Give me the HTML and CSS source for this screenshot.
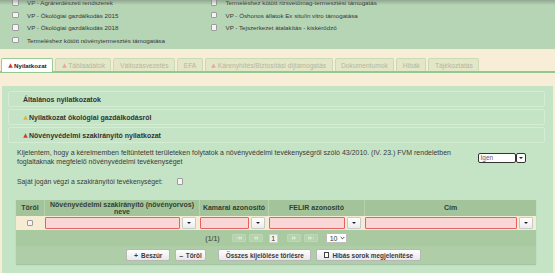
FILE: index.html
```html
<!DOCTYPE html>
<html lang="hu">
<head>
<meta charset="utf-8">
<title>Nyilatkozat</title>
<link rel="stylesheet" href="styles.css">
</head>
<body>
<section class="support">
  <div class="support-grid">
    <label class="opt"><span class="cb"></span>VP - Agrárerdészeti rendszerek</label>
    <label class="opt"><span class="cb"></span>Termeléshez kötött rizsvetőmag-termesztési támogatás</label>
    <label class="opt"><span class="cb"></span>VP - Ökológiai gazdálkodás 2015</label>
    <label class="opt"><span class="cb"></span>VP - Őshonos állatok Ex situ/in vitro támogatása</label>
    <label class="opt"><span class="cb"></span>VP - Ökológiai gazdálkodás 2018</label>
    <label class="opt"><span class="cb"></span>VP - Tejszerkezet átalakítás - kiskérődző</label>
    <label class="opt"><span class="cb"></span>Termeléshez kötött növénytermesztés támogatása</label>
  </div>
</section>

<nav class="tabs">
  <div class="tab active"><svg class="warn" viewBox="0 0 10 10"><path d="M5 0.5 L9.6 9.5 H0.4 Z" fill="#d23b32"/></svg>Nyilatkozat</div>
  <div class="tab"><svg class="warn" viewBox="0 0 10 10"><path d="M5 0.5 L9.6 9.5 H0.4 Z" fill="#eaa79d"/></svg>Táblaadatok</div>
  <div class="tab">Változásvezetés</div>
  <div class="tab">EFA</div>
  <div class="tab"><svg class="warn" viewBox="0 0 10 10"><path d="M5 0.5 L9.6 9.5 H0.4 Z" fill="#eaa79d"/></svg>Kárenyhítés/Biztosítási díjtámogatás</div>
  <div class="tab">Dokumentumok</div>
  <div class="tab">Hibák</div>
  <div class="tab">Tájékoztatás</div>
</nav>

<main class="panel">
  <div class="acc">Általános nyilatkozatok</div>
  <div class="acc"><svg class="warn" viewBox="0 0 10 10"><path d="M5 0.5 L9.6 9.5 H0.4 Z" fill="#e2b23c"/></svg>Nyilatkozat ökológiai gazdálkodásról</div>
  <div class="acc"><svg class="warn" viewBox="0 0 10 10"><path d="M5 0.5 L9.6 9.5 H0.4 Z" fill="#d23b32"/></svg>Növényvédelmi szakirányító nyilatkozat</div>

  <div class="decl">
    <p>Kijelentem, hogy a kérelmemben feltüntetett területeken folytatok a növényvédelmi tevékenységről szóló 43/2010. (IV. 23.) FVM rendeletben foglaltaknak megfelelő növényvédelmi tevékenységet</p>
    <div class="yesno"><span class="yn-val">Igen</span><span class="yn-btn"></span></div>
  </div>

  <div class="self">Saját jogán végzi a szakirányítói tevékenységet: <span class="cb"></span></div>

  <div class="tbl">
    <div class="cols thead">
      <div class="th">Töröl</div>
      <div class="th">Növényvédelmi szakirányító (növényorvos) neve</div>
      <div class="th th-nowrap">Kamarai azonosító</div>
      <div class="th th-nowrap">FELIR azonosító</div>
      <div class="th">Cím</div>
    </div>
    <div class="cols trow">
      <div class="td td-check"><span class="cb"></span></div>
      <div class="td"><span class="inp"></span><span class="dd"></span></div>
      <div class="td"><span class="inp"></span><span class="dd"></span></div>
      <div class="td"><span class="inp"></span><span class="dd"></span></div>
      <div class="td"><span class="inp"></span><span class="dd"></span></div>
    </div>
    <div class="pager">
      <span class="pg-info">(1/1)</span>
      <span class="pg-btn pg-first"><svg viewBox="0 0 14 8"><path d="M4 2 V6 M8 2 L5.5 4 L8 6 Z M10.5 2 L8 4 L10.5 6 Z" stroke="#d6ead2" stroke-width="0.8" fill="#d6ead2"/></svg></span>
      <span class="pg-btn pg-prev"><svg viewBox="0 0 14 8"><path d="M7 2 L4.5 4 L7 6 Z M9.5 2 L7 4 L9.5 6 Z" stroke="#d6ead2" stroke-width="0.8" fill="#d6ead2"/></svg></span>
      <span class="pg-page">1</span>
      <span class="pg-btn pg-next"><svg viewBox="0 0 14 8"><path d="M4.5 2 L7 4 L4.5 6 Z M7 2 L9.5 4 L7 6 Z" stroke="#d6ead2" stroke-width="0.8" fill="#d6ead2"/></svg></span>
      <span class="pg-btn pg-last"><svg viewBox="0 0 14 8"><path d="M3.5 2 L6 4 L3.5 6 Z M6 2 L8.5 4 L6 6 Z M10 2 V6" stroke="#d6ead2" stroke-width="0.8" fill="#d6ead2"/></svg></span>
      <span class="pg-size">10<svg viewBox="0 0 6 4"><path d="M0.8 0.8 L3 3 L5.2 0.8" stroke="#333" stroke-width="1.1" fill="none"/></svg></span>
    </div>
    <div class="actions">
      <button class="btn"><span class="ico-plus">+</span>Beszúr</button>
      <button class="btn btn-tight"><span class="ico-minus">–</span>Töröl</button>
      <button class="btn btn-wide">Összes kijelölése törlésre</button>
      <button class="btn"><span class="ico-box"></span>Hibás sorok megjelenítése</button>
    </div>
  </div>
</main>
</body>
</html>
```

FILE: styles.css
```css
* { box-sizing: border-box; margin: 0; padding: 0; }
html, body { width: 555px; height: 273px; overflow: hidden; }
body {
  background: #f8edd6;
  font-family: "Liberation Sans", Arial, sans-serif;
  color: #333;
}

/* top support list */
.support {
  position: relative;
  height: 49px;
  background: #b5d5b5;
  overflow: hidden;
}
.support::after {
  content: "";
  position: absolute;
  left: 0; right: 0; top: 0;
  height: 5px;
  background: linear-gradient(rgba(110, 120, 110, .5), rgba(110, 120, 110, 0));
}
.support-grid {
  display: grid;
  grid-template-columns: 198.5px 1fr;
  grid-auto-rows: 12.5px;
  margin-top: -3.75px;
  padding-left: 12px;
  font-size: 6.2px;
  color: #353535;
}
.opt { display: flex; align-items: center; gap: 8.5px; white-space: nowrap; }
.cb {
  flex: none;
  width: 6.5px; height: 6.5px;
  border: 1px solid #9c9c9c;
  background: #f4f4f4;
  border-radius: 1px;
}

/* tabs */
.tabs {
  display: flex;
  align-items: flex-end;
  gap: 2px;
  height: 15px;
  margin-top: 9px;
  padding-left: 1px;
  border-bottom: 2px solid #92c992;
}
.tab {
  display: flex;
  align-items: center;
  gap: 1.5px;
  height: 13px;
  padding: 0 5.5px;
  font-size: 6.7px;
  color: #b3b8a1;
  background: #e4e6c8;
  border: 1px solid #c9dbb6;
  border-bottom: none;
  border-radius: 2px 2px 0 0;
  white-space: nowrap;
}
.tab.active {
  height: 14px;
  margin-bottom: -1px;
  padding: 0 5.5px 1px;
  background: #fff;
  color: #222;
  font-size: 6.2px;
  font-weight: bold;
  border-color: #94cc94;
}
.warn { width: 5px; height: 5px; flex: none; }

/* main panel */
.panel {
  height: 200px;
  margin: 13px 2px 0;
  padding: 5px 8px 0 6px;
  background: #c5e3c5;
}
.acc {
  display: flex;
  align-items: center;
  gap: 1px;
  height: 16px;
  margin-bottom: 2px;
  padding-left: 14px;
  border: 1px solid #d5ecd4;
  border-radius: 2px;
  font-size: 7px;
  font-weight: bold;
  color: #333;
}

.decl {
  display: flex;
  align-items: flex-start;
  margin-top: 6px;
  padding-left: 9px;
  font-size: 7px;
  line-height: 8.5px;
  color: #3a3a3a;
}
.decl p { width: 445px; }
.yesno { display: flex; gap: 0.5px; margin: 3.5px 19px 0 auto; }
.yn-val {
  width: 38px; height: 10px;
  padding-left: 2px;
  border: 1px solid #333;
  border-radius: 2px;
  background: #fff;
  font-size: 6.5px;
  line-height: 8px;
  color: #5b5b78;
}
.yn-btn {
  display: flex; align-items: center; justify-content: center;
  width: 10px; height: 10px;
  border: 1px solid #333;
  border-radius: 2px;
  background: #fff;
}
.yn-btn::after, .dd::after {
  content: "";
  border-left: 2px solid transparent;
  border-right: 2px solid transparent;
  border-top: 2px solid #222;
}

.self {
  display: flex;
  align-items: center;
  gap: 14px;
  height: 8.5px;
  margin-top: 11px;
  padding-left: 9px;
  font-size: 6.85px;
  color: #3a3a3a;
}

/* table */
.tbl {
  width: 520px;
  margin: 14.5px 0 0 8px;
  box-shadow: 0 1px 1px rgba(120, 150, 120, .4);
}
.cols {
  display: grid;
  grid-template-columns: 28px 155px 69px 96px 172px;
}
.thead { height: 16px; background: #a3c49b; }
.th {
  display: flex;
  align-items: center;
  justify-content: center;
  padding: 0 3px;
  border-left: 1px solid #b6d2ae;
  text-align: center;
  font-size: 7px;
  font-weight: bold;
  line-height: 7.5px;
  color: #34402f;
}
.th:first-child { border-left: none; }
.th-nowrap { padding: 0; white-space: nowrap; }
.trow { height: 14px; background: #f6ebd3; }
.td { display: flex; align-items: center; gap: 2px; padding: 0 3px 0 1px; }
.td-check { justify-content: center; padding: 0; }
.inp {
  flex: 1;
  height: 12px;
  background: #f8d7d6;
  border: 1px solid #e46262;
  border-radius: 1px;
}
.dd {
  display: flex; align-items: center; justify-content: center;
  width: 14px; height: 12px;
  background: linear-gradient(#fff, #ececec);
  border: 1px solid #c9c9c9;
  border-radius: 1px;
}

.pager {
  display: flex;
  align-items: center;
  justify-content: center;
  height: 16px;
  background: #a9c9a1;
  font-size: 7px;
  color: #333;
}
.pg-info { margin-right: 12px; }
.pg-btn {
  display: flex;
  width: 14px; height: 8px;
  background: #b4d2ac;
  border: 1px solid #bcd8b5;
  border-radius: 1px;
}
.pg-btn svg { width: 100%; height: 100%; }
.pg-prev { margin-left: 3px; }
.pg-last { margin-left: 3px; }
.pg-page {
  width: 9px; height: 9px;
  margin: 0 9px 0 6px;
  background: #f5f5f0;
  border: 1px solid #cfcfcf;
  border-radius: 1px;
  text-align: center;
  line-height: 7px;
}
.pg-size {
  display: flex; align-items: center; gap: 2px;
  width: 21px; height: 10px;
  margin-left: 8px;
  padding-left: 3px;
  background: #fff;
  border: 1px solid #bdbdbd;
  border-radius: 1px;
}
.pg-size svg { width: 5px; height: 4px; }

.actions {
  display: flex;
  align-items: center;
  justify-content: center;
  gap: 5px;
  height: 18px;
  padding-right: 5px;
  background: #afcea7;
}
.btn {
  display: flex;
  align-items: center;
  gap: 3px;
  height: 12px;
  padding: 0 6.5px;
  border: 1px solid #b7b7b7;
  border-radius: 2px;
  background: linear-gradient(#fefefe, #e8e8e8);
  font-family: inherit;
  font-size: 6.4px;
  font-weight: bold;
  color: #3a3a3a;
}
.btn-tight { padding: 0 3.5px; gap: 2.5px; }
.btn-wide { margin-left: 7px; }
.ico-plus, .ico-minus { font-weight: bold; font-size: 7px; }
.ico-box {
  width: 5.5px; height: 5.5px;
  border: 0.8px solid #444;
  background: #fff;
}
```
